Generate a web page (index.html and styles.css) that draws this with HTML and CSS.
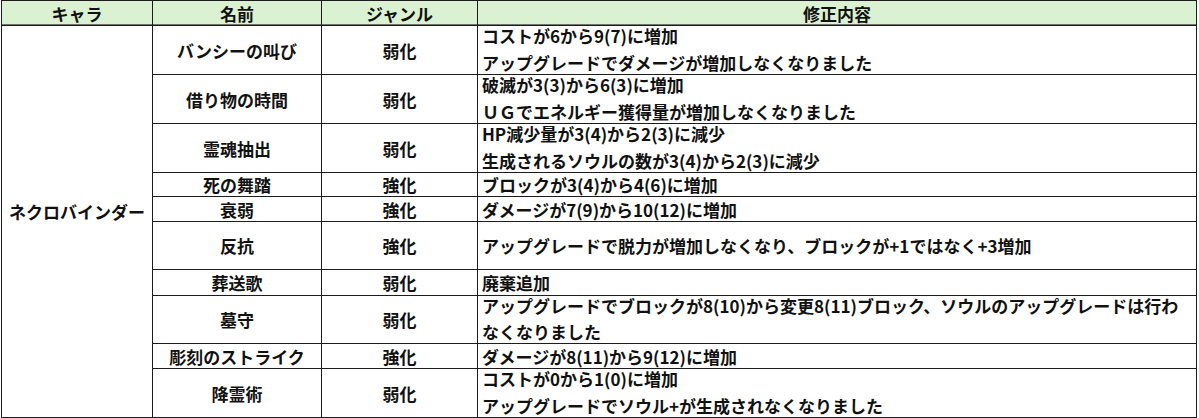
FILE: index.html
```html
<!DOCTYPE html>
<html lang="ja">
<head>
<meta charset="utf-8">
<title>ネクロバインダー 修正内容</title>
<link rel="stylesheet" href="styles.css">
</head>
<body>
<div class="sheet">
  <div class="hd">キャラ</div>
  <div class="hd">名前</div>
  <div class="hd">ジャンル</div>
  <div class="hd">修正内容</div>

  <div class="chara">ネクロバインダー</div>

  <div class="c r1">バンシーの叫び</div>
  <div class="c r1">弱化</div>
  <div class="d two r1"><span>コストが6から9(7)に増加</span><span>アップグレードでダメージが増加しなくなりました</span></div>

  <div class="c r2">借り物の時間</div>
  <div class="c r2">弱化</div>
  <div class="d two r2"><span>破滅が3(3)から6(3)に増加</span><span>ＵＧでエネルギー獲得量が増加しなくなりました</span></div>

  <div class="c r3">霊魂抽出</div>
  <div class="c r3">弱化</div>
  <div class="d two r3"><span>HP減少量が3(4)から2(3)に減少</span><span>生成されるソウルの数が3(4)から2(3)に減少</span></div>

  <div class="c r4">死の舞踏</div>
  <div class="c r4">強化</div>
  <div class="d r4"><span>ブロックが3(4)から4(6)に増加</span></div>

  <div class="c r5">衰弱</div>
  <div class="c r5">強化</div>
  <div class="d r5"><span>ダメージが7(9)から10(12)に増加</span></div>

  <div class="c r6">反抗</div>
  <div class="c r6">強化</div>
  <div class="d r6"><span>アップグレードで脱力が増加しなくなり、ブロックが+1ではなく+3増加</span></div>

  <div class="c r7">葬送歌</div>
  <div class="c r7">弱化</div>
  <div class="d r7"><span>廃棄追加</span></div>

  <div class="c r8">墓守</div>
  <div class="c r8">弱化</div>
  <div class="d two r8"><span>アップグレードでブロックが8(10)から変更8(11)ブロック、ソウルのアップグレードは行わ</span><span>なくなりました</span></div>

  <div class="c r9">彫刻のストライク</div>
  <div class="c r9">強化</div>
  <div class="d r9"><span>ダメージが8(11)から9(12)に増加</span></div>

  <div class="c r10">降霊術</div>
  <div class="c r10">弱化</div>
  <div class="d two r10"><span>コストが0から1(0)に増加</span><span>アップグレードでソウル+が生成されなくなりました</span></div>
</div>
</body>
</html>
```

FILE: styles.css
```css
html, body {
  margin: 0;
  padding: 0;
  background: #ffffff;
}

body {
  padding-left: 1px;
  font-family: "Noto Sans CJK JP", "Noto Sans", sans-serif;
  font-size: 17px;
  font-weight: 700;
  color: #111111;
}

.sheet {
  display: grid;
  width: 1196px;
  box-sizing: border-box;
  grid-template-columns: 150px 168px 155px 718px;
  grid-template-rows: 24px 48px 48px 48px 23px 24px 47px 25px 47px 24px 48px;
  gap: 1px;
  padding: 1px;
  background: #1c1c1c;
}

.sheet > div {
  background: #ffffff;
  line-height: 17px;
  white-space: nowrap;
  box-sizing: border-box;
}

.hd {
  background: #dbf2d2 !important;
  display: flex;
  align-items: center;
  justify-content: center;
  box-shadow: inset 0 -1px 0 #6f756d;
}

.chara {
  grid-column: 1;
  grid-row: 2 / 12;
  display: flex;
  align-items: center;
  justify-content: center;
  padding-bottom: 20px;
}

.c {
  display: flex;
  align-items: center;
  justify-content: center;
}

.d {
  display: flex;
  flex-direction: column;
  justify-content: center;
  padding-left: 4px;
}

.d.two {
  justify-content: space-between;
  padding-top: 1px;
  padding-bottom: 3px;
}
```
